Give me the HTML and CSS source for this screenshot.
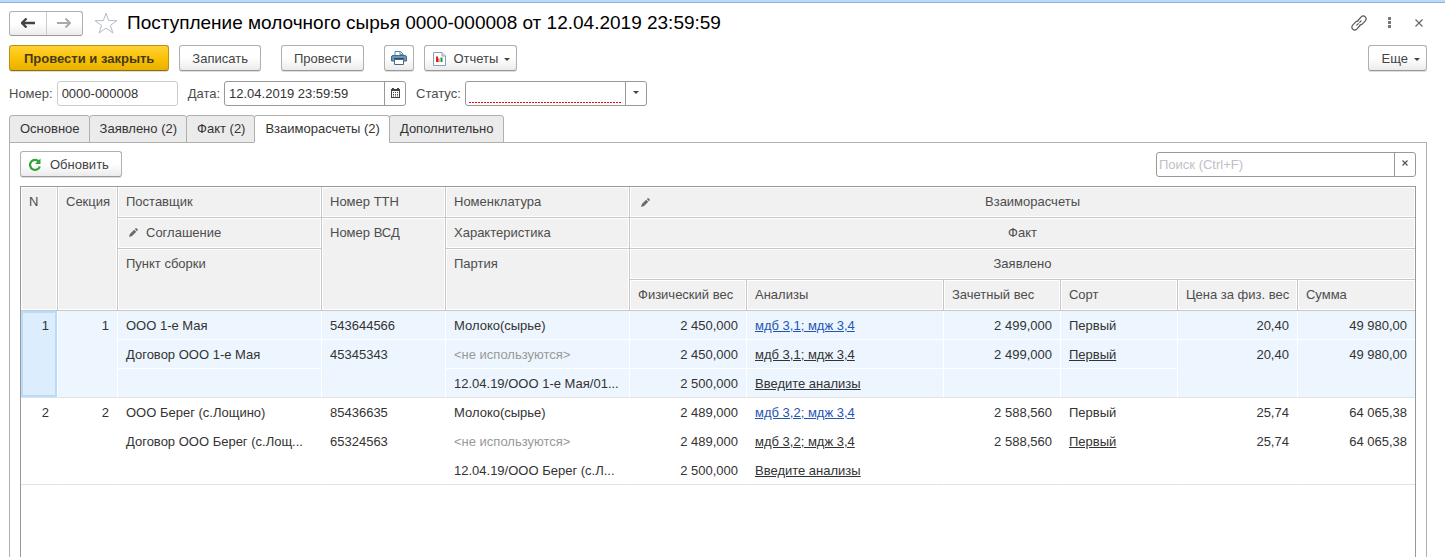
FILE: index.html
```html
<!DOCTYPE html>
<html lang="ru">
<head>
<meta charset="utf-8">
<title>Поступление молочного сырья</title>
<link rel="stylesheet" href="styles.css">
</head>
<body>
<svg class="sprite" aria-hidden="true">
  <symbol id="pencil" viewBox="0 0 10 10"><path d="M0 10l1-3.400 4.700-4.700 2.400 2.400L3.400 9zM6.500 1.200l.9-.9q.5-.5 1 0l1.300 1.300q.5.500 0 1l-.9.900z" fill="#6a6a6a"/></symbol>
</svg>
<header class="titlebar">
  <div class="nav">
    <button type="button" class="nav-button" aria-label="Назад"><svg width="14" height="10" viewBox="0 0 14 10"><path d="M5.500.500L1 5l4.500 4.500M1.500 5H14" fill="none" stroke="#444" stroke-width="2.400"/></svg></button>
    <button type="button" class="nav-button" aria-label="Вперед"><svg width="14" height="10" viewBox="0 0 14 10"><path d="M8.500.500L13 5 8.500 9.500M12.500 5H0" fill="none" stroke="#aaa" stroke-width="2"/></svg></button>
  </div>
  <button type="button" class="icon-button star" aria-label="В избранное"><svg width="24" height="22" viewBox="0 0 24 22"><path d="M12 1.200l2.700 7.400h8.300l-6.600 4.700 2.500 7.700-6.900-4.800L5.100 21l2.500-7.700L1 8.600h8.300z" fill="#fff" stroke="#b4bcc4" stroke-width="1"/></svg></button>
  <h1 class="title">Поступление молочного сырья 0000-000008 от 12.04.2019 23:59:59</h1>
  <div class="window-tools">
    <button type="button" class="icon-button" aria-label="Ссылка"><svg width="16" height="16" viewBox="0 0 16 16"><g fill="none" stroke="#555" stroke-width="1.200" stroke-linecap="round"><path d="M7 5.500L10.200 1.900q2-1.900 4-.1 1.900 2 .1 4L11 9.300q-1 .8-2 .500"/><path d="M9 10.500L5.800 14.100q-2 1.900-4 .1-1.900-2-.1-4L5 6.700q1-.8 2-.500"/><path d="M5.800 10.200l1.500-1.500M8.700 7.300l1.500-1.500"/></g></svg></button>
    <button type="button" class="icon-button" aria-label="Меню"><svg width="16" height="12" viewBox="0 0 16 12"><path d="M7 0h3v3H7zM7 4h3v3H7zM7 8h3v3H7z" fill="#777"/></svg></button>
    <button type="button" class="icon-button" aria-label="Закрыть"><svg width="16" height="8" viewBox="0 0 16 8"><path d="M4.500.500l7 7m0-7l-7 7" stroke="#666" stroke-width="1.200"/></svg></button>
  </div>
</header>

<div class="toolbar">
  <button type="button" class="button primary">Провести и закрыть</button>
  <button type="button" class="button save">Записать</button>
  <button type="button" class="button post">Провести</button>
  <button type="button" class="button square" aria-label="Печать"><svg width="16" height="14" viewBox="0 0 16 14"><path d="M4 5V.500h5.500L12 3v2" fill="#fff" stroke="#5b83a8"/><path d="M9 0v3.500h3" fill="none" stroke="#5b83a8"/><path d="M2 4.500h12q1.500 0 1.500 1.500v4H.5V6q0-1.500 1.500-1.500z" fill="#6f95b8" stroke="#46698c"/><path d="M3 7.500h10" stroke="#28496a"/><path d="M3.500 8.500h9v5h-9z" fill="#fff" stroke="#46698c"/></svg></button>
  <button type="button" class="button reports"><svg width="13" height="14" viewBox="0 0 13 14"><path d="M.5.500h8.500l3.500 3.500v9.500H.5z" fill="#fff" stroke="#8aa0b8"/><path d="M9 .5V4h3.500" fill="#dfe8f0" stroke="#8aa0b8"/><path d="M3 4.500h2V10H3z" fill="#e02020"/><path d="M5 6.500h1.500V10H5z" fill="#e66"/><path d="M7.500 5.500h2V10h-2z" fill="#1d9b35"/></svg>Отчеты<i class="caret"></i></button>
  <button type="button" class="button more">Еще<i class="caret"></i></button>
</div>

<form class="fields">
  <label for="number">Номер:</label>
  <div class="field readonly number"><input id="number" type="text" value="0000-000008" readonly></div>
  <label for="date">Дата:</label>
  <div class="field"><input id="date" type="text" value="12.04.2019 23:59:59"><button type="button" class="addon" aria-label="Выбрать дату"><svg width="9" height="10" viewBox="0 0 9 10"><path d="M1 0h2v1h3V0h2v1h1v9H0V1h1z" fill="#444"/><path d="M1 3h7v6H1z" fill="#fff"/><path d="M2 4.500h6M2 6.500h6M2 8h6" stroke="#444" stroke-dasharray="1 1"/></svg></button></div>
  <label for="status">Статус:</label>
  <div class="field"><select id="status" class="required"><option></option></select><span class="addon"><i class="caret"></i></span></div>
</form>

<nav class="tabs" role="tablist">
  <button type="button" class="tab" role="tab">Основное</button>
  <button type="button" class="tab" role="tab">Заявлено (2)</button>
  <button type="button" class="tab" role="tab">Факт (2)</button>
  <button type="button" class="tab active" role="tab" aria-selected="true">Взаиморасчеты (2)</button>
  <button type="button" class="tab" role="tab">Дополнительно</button>
</nav>

<main class="panel">
  <div class="panel-bar">
    <button type="button" class="button refresh"><svg width="14" height="14" viewBox="0 0 14 14"><path d="M10.600 3.400A5 5 0 1 0 11.800 8.500" fill="none" stroke="#2fa336" stroke-width="2.200"/><path d="M12.500.500v5.500H7z" fill="#2fa336"/></svg>Обновить</button>
    <div class="field search"><input type="text" placeholder="Поиск (Ctrl+F)" aria-label="Поиск"><button type="button" class="addon" aria-label="Очистить"><svg width="6" height="6" viewBox="0 0 6 6"><path d="M.5.500l5 5m0-5l-5 5" stroke="#555" stroke-width="1.200"/></svg></button></div>
  </div>
  <div class="grid">
    <table>
      <colgroup><col class="c-n"><col class="c-section"><col class="c-supplier"><col class="c-ttn"><col class="c-item"><col class="c-number"><col><col class="c-number"><col class="c-number"><col class="c-price"><col class="c-number"></colgroup>
      <thead>
        <tr><th rowspan="4">N</th><th rowspan="4">Секция</th><th>Поставщик</th><th>Номер ТТН</th><th>Номенклатура</th><th colspan="6" class="group"><div class="group-line"><svg class="pencil"><use href="#pencil"/></svg><span>Взаиморасчеты</span></div></th></tr>
        <tr><th><svg class="pencil lead"><use href="#pencil"/></svg>Соглашение</th><th rowspan="3">Номер ВСД</th><th>Характеристика</th><th colspan="6" class="group">Факт</th></tr>
        <tr><th rowspan="2">Пункт сборки</th><th rowspan="2">Партия</th><th colspan="6" class="group">Заявлено</th></tr>
        <tr><th>Физический вес</th><th>Анализы</th><th>Зачетный вес</th><th>Сорт</th><th>Цена за физ. вес</th><th>Сумма</th></tr>
      </thead>
      <tbody class="selected">
        <tr><td rowspan="3" class="num current">1</td><td rowspan="3" class="num">1</td><td>ООО 1-е Мая</td><td>543644566</td><td>Молоко(сырье)</td><td class="num">2 450,000</td><td><a href="#" class="blue">мдб 3,1; мдж 3,4</a></td><td class="num">2 499,000</td><td>Первый</td><td class="num">20,40</td><td class="num">49 980,00</td></tr>
        <tr><td>Договор ООО 1-е Мая</td><td rowspan="2">45345343</td><td class="muted">&lt;не используются&gt;</td><td class="num">2 450,000</td><td><a href="#">мдб 3,1; мдж 3,4</a></td><td class="num">2 499,000</td><td><a href="#">Первый</a></td><td rowspan="2" class="num">20,40</td><td rowspan="2" class="num">49 980,00</td></tr>
        <tr><td></td><td>12.04.19/ООО 1-е Мая/01...</td><td class="num">2 500,000</td><td><a href="#">Введите анализы</a></td><td></td><td></td></tr>
      </tbody>
      <tbody>
        <tr><td rowspan="3" class="num">2</td><td rowspan="3" class="num">2</td><td>ООО Берег (с.Лощино)</td><td>85436635</td><td>Молоко(сырье)</td><td class="num">2 489,000</td><td><a href="#" class="blue">мдб 3,2; мдж 3,4</a></td><td class="num">2 588,560</td><td>Первый</td><td class="num">25,74</td><td class="num">64 065,38</td></tr>
        <tr><td>Договор ООО Берег (с.Лощ...</td><td rowspan="2">65324563</td><td class="muted">&lt;не используются&gt;</td><td class="num">2 489,000</td><td><a href="#">мдб 3,2; мдж 3,4</a></td><td class="num">2 588,560</td><td><a href="#">Первый</a></td><td rowspan="2" class="num">25,74</td><td rowspan="2" class="num">64 065,38</td></tr>
        <tr><td></td><td>12.04.19/ООО Берег (с.Л...</td><td class="num">2 500,000</td><td><a href="#">Введите анализы</a></td><td></td><td></td></tr>
      </tbody>
    </table>
  </div>
</main>
</body>
</html>
```

FILE: styles.css
```css
* { box-sizing: border-box; }

body {
  margin: 0;
  height: 100vh;
  overflow: hidden;
  display: flex;
  flex-direction: column;
  border-top: 2px solid #b9dcfb;
  background: #fff;
  color: #333;
  font: 13px/16px "Liberation Sans", Arial, sans-serif;
}

button, input, select { font: inherit; color: inherit; margin: 0; }
svg { display: block; flex: none; }
.sprite { position: absolute; width: 0; height: 0; }

.titlebar {
  display: flex;
  align-items: center;
  height: 43px;
  padding: 0 18px 2px 9px;
  border-top: 1px solid #8fb0d0;
}

.nav {
  display: flex;
  width: 74px;
  height: 25px;
  border: 1px solid #b0b0b0;
  border-bottom-color: #999;
  border-radius: 3px;
  background: linear-gradient(#fff 50%, #ececec);
}
.nav-button {
  flex: 1;
  display: flex;
  align-items: center;
  justify-content: center;
  padding: 0;
  border: 0;
  background: none;
}
.nav-button + .nav-button { border-left: 1px solid #ccc; }

.icon-button { padding: 0; border: 0; background: none; }
.star { margin-left: 11px; }
.title {
  margin: 0 0 0 9px;
  color: #000;
  font-size: 19px;
  line-height: 24px;
  font-weight: 400;
  white-space: nowrap;
}
.window-tools { display: flex; align-items: center; gap: 14px; margin-left: auto; }

.toolbar { display: flex; padding: 0 18px 0 9px; }
.button {
  display: flex;
  align-items: center;
  justify-content: center;
  height: 26px;
  padding: 1px 12px 0;
  border: 1px solid #b0b0b0;
  border-bottom-color: #999;
  border-radius: 3px;
  background: linear-gradient(#fff 50%, #ebebeb);
  box-shadow: 0 1px 0 #ddd;
  color: #444;
  white-space: nowrap;
}
.toolbar .button { margin-right: 10px; }
.toolbar .save, .toolbar .post { margin-right: 20px; }
.toolbar .primary {
  padding: 1px 14px 0;
  border-color: #b89312;
  border-bottom-color: #8d6f08;
  background: linear-gradient(#ffd235, #fcc208 50%, #e8b000);
  color: #443a1a;
  font-weight: 700;
}
.toolbar .square { width: 30px; padding: 0; }
.reports { padding: 1px 6px 0 8px; }
.reports svg { margin-right: 7px; }
.toolbar .more { margin: 0 0 0 auto; padding: 1px 6px 0 13px; }
.caret {
  border: 3px solid transparent;
  border-top-color: #444;
  border-bottom-width: 0;
}
.button .caret { margin: 2px 0 0 6px; }

.fields { display: flex; align-items: center; margin: 10px 0 0 9px; }
.fields label { margin-right: 4px; color: #4d4d4d; }
.fields .field { width: 182px; margin-right: 10px; }
.field {
  display: flex;
  height: 25px;
  border: 1px solid #999;
  border-radius: 3px;
  background: #fff;
}
.fields .number { width: 121px; }
.field.readonly { border-color: #ccc; }
.field input {
  flex: 1;
  min-width: 0;
  padding: 0 0 0 4px;
  border: 0;
  outline: 0;
  background: none;
}
.field.search { width: 260px; }
.search input { padding: 1px 0 0 2px; }
.field input::placeholder { color: #c0c0c8; opacity: 1; }
.addon {
  display: flex;
  align-items: center;
  justify-content: center;
  width: 21px;
  padding: 0 0 2px;
  border: 0;
  border-left: 1px solid #999;
  background: none;
}
.field .required {
  flex: 1;
  min-width: 0;
  height: 21px;
  margin: 0 3px;
  padding: 0;
  border: 0;
  appearance: none;
  background: repeating-linear-gradient(90deg, #f00 0 2px, #fff 2px 3px) bottom / 100% 1px no-repeat;
}

.tabs { display: flex; margin: 9px 0 0 9px; }
.tab {
  position: relative;
  height: 28px;
  margin-right: -1px;
  padding: 0 9px 1px 10px;
  border: 1px solid #b0b0b0;
  border-radius: 3px 3px 0 0;
  background: #ebebeb;
}
.tab.active { border-bottom-color: #fff; background: #fff; }

.panel {
  flex: 1;
  display: flex;
  flex-direction: column;
  margin: -1px 18px 0 9px;
  padding: 8px 10px 0;
  border: 1px solid #b0b0b0;
  border-bottom: 0;
}
.panel-bar { display: flex; align-items: center; justify-content: space-between; margin-bottom: 9px; }
.refresh { padding: 1px 12px 0 7px; }
.refresh svg { margin-right: 8px; }

.grid { flex: 1; border: 1px solid #999; border-bottom: 0; }
table { width: 100%; table-layout: fixed; border-collapse: separate; border-spacing: 0; }
.c-n { width: 37px; }
.c-section { width: 60px; }
.c-supplier { width: 204px; }
.c-ttn { width: 124px; }
.c-item { width: 184px; }
.c-number { width: 117px; }
.c-price { width: 120px; }

th, td { overflow: hidden; vertical-align: top; white-space: nowrap; text-align: left; }
th {
  height: 31px;
  padding: 7px 0 7px 8px;
  border-right: 1px solid #c8c8c8;
  border-bottom: 1px solid #c8c8c8;
  background: #f1f1f1;
  box-shadow: inset 0 0 0 1px #fff;
  color: #4d4d4d;
  font-weight: 400;
}
.group { padding-left: 0; text-align: center; }
th:last-child { border-right: 0; }
.group-line { display: flex; align-items: center; padding-left: 11px; }
.group-line span { flex: 1; }
.pencil { width: 9px; height: 9px; }
.lead { display: inline-block; margin: 0 8px 0 3px; }

td {
  height: 29px;
  padding: 7px 0 5px 8px;
  border-right: 1px solid #fff;
  border-bottom: 1px solid #fff;
}
.num { padding: 7px 8px 5px 0; text-align: right; }
.num:last-child { border-right: 0; }
.selected td { background: #edf6fe; }
tbody tr:last-child td, td[rowspan] { border-bottom-color: #e2e2e2; }
.selected .current { background: #dceefd; box-shadow: inset 0 0 0 2px #b8dcfa; }
.muted { color: #999; }
a { color: inherit; text-underline-offset: 1px; }
.blue { color: #1f55b5; }
```
